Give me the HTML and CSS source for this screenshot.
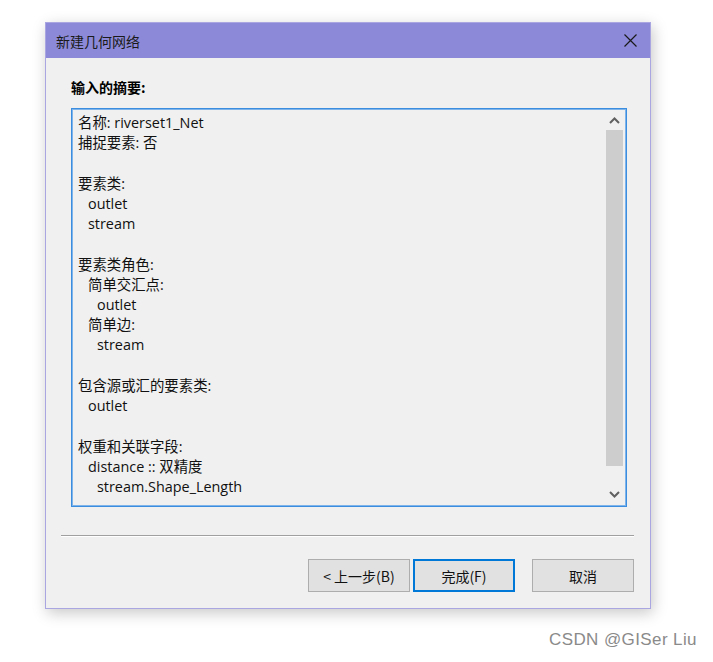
FILE: index.html
```html
<!DOCTYPE html>
<html lang="zh">
<head>
<meta charset="utf-8">
<title>新建几何网络</title>
<link rel="stylesheet" href="styles.css">
</head>
<body>
<div class="dialog">
  <div class="titlebar">
    <span class="title">新建几何网络</span>
    <svg class="close" width="13" height="13" viewBox="0 0 13 13"><path d="M0.5 0.5L12.5 12.5M12.5 0.5L0.5 12.5" stroke="#1a1a1a" stroke-width="1.2" fill="none"/></svg>
  </div>
  <div class="body">
    <div class="label">输入的摘要:</div>
    <div class="textbox">
      <div class="content">
        <div class="line">名称: riverset1_Net</div>
        <div class="line">捕捉要素: 否</div>
        <div class="line"></div>
        <div class="line">要素类:</div>
        <div class="line i1">outlet</div>
        <div class="line i1">stream</div>
        <div class="line"></div>
        <div class="line">要素类角色:</div>
        <div class="line i1">简单交汇点:</div>
        <div class="line i2">outlet</div>
        <div class="line i1">简单边:</div>
        <div class="line i2">stream</div>
        <div class="line"></div>
        <div class="line">包含源或汇的要素类:</div>
        <div class="line i1">outlet</div>
        <div class="line"></div>
        <div class="line">权重和关联字段:</div>
        <div class="line i1">distance :: 双精度</div>
        <div class="line i2">stream.Shape_Length</div>
      </div>
      <div class="scrollbar">
        <div class="arrow"><svg width="11" height="7" viewBox="0 0 11 7"><path d="M1 6L5.5 1.5L10 6" stroke="#606060" stroke-width="2" fill="none"/></svg></div>
        <div class="thumb"></div>
        <div class="track"></div>
        <div class="arrow"><svg width="11" height="7" viewBox="0 0 11 7"><path d="M1 1L5.5 5.5L10 1" stroke="#606060" stroke-width="2" fill="none"/></svg></div>
      </div>
    </div>
    <div class="separator"></div>
    <div class="buttons">
      <button class="btn">&lt; 上一步(B)</button>
      <button class="btn primary">完成(F)</button>
      <button class="btn cancel">取消</button>
    </div>
  </div>
</div>
<div class="watermark">CSDN @GISer Liu</div>
</body>
</html>
```
FILE: styles.css
```css
html, body {
  margin: 0;
  padding: 0;
  background: #ffffff;
}
body {
  width: 713px;
  height: 662px;
  position: relative;
  overflow: hidden;
  font-family: "Open Sans", "Noto Sans CJK SC", sans-serif;
  color: #000;
}
.dialog {
  margin-left: 45px;
  margin-top: 22px;
  width: 604px;
  height: 585px;
  border: 1px solid #a9a6e2;
  background: #f0f0f0;
  box-shadow: 2px 4px 14px rgba(0,0,0,0.22);
  display: flex;
  flex-direction: column;
}
.titlebar {
  height: 35px;
  background: #8c8ad8;
  display: flex;
  align-items: center;
  justify-content: space-between;
  padding: 0 13px 0 10px;
  flex: none;
}
.title {
  font-size: 14px;
  color: #1a1a1a;
  font-family: "Noto Sans CJK SC", sans-serif;
}
.close { display: block; }
.body {
  flex: 1;
  display: flex;
  flex-direction: column;
  padding: 0 16px 0 15px;
}
.label {
  font-family: "Noto Sans CJK SC", sans-serif;
  font-weight: bold;
  font-size: 14px;
  line-height: 20px;
  margin: 19px 0 0 10px;
  height: 20px;
}
.textbox {
  margin: 11px 7px 0 10px;
  height: 393px;
  border: 1px solid #3a8ddf;
  box-shadow: inset 0 0 0 1px #7fb4ea;
  background: #f0f0f0;
  display: flex;
  padding: 2px;
  flex: none;
}
.content {
  flex: 1;
  padding: 2px 0 0 4px;
  font-size: 14.4px;
  line-height: 20.22px;
  color: #111;
}
.line {
  height: 20.22px;
  white-space: pre;
}
.i1 { padding-left: 10px; }
.i2 { padding-left: 19px; }
.scrollbar {
  width: 17px;
  display: flex;
  flex-direction: column;
  margin-right: 1px;
  background: #f0f0f0;
}
.arrow {
  height: 19px;
  display: flex;
  align-items: center;
  justify-content: center;
  flex: none;
}
.thumb {
  height: 336px;
  background: #cdcdcd;
  flex: none;
}
.track { flex: 1; }
.separator {
  margin: 28px 0 0 0;
  height: 1px;
  background: #a0a0a0;
  border-bottom: 1px solid #ffffff;
  flex: none;
}
.buttons {
  display: flex;
  justify-content: flex-end;
  margin-top: 22px;
  gap: 3px;
}
.btn {
  width: 102px;
  height: 33px;
  background: #e1e1e1;
  border: 1px solid #adadad;
  font-family: "Noto Sans CJK SC", sans-serif;
  font-size: 14px;
  color: #111;
  padding: 0;
  margin: 0;
}
.btn.primary {
  border: 2px solid #0078d7;
}
.btn.cancel {
  margin-left: 14px;
}
.watermark {
  position: absolute;
  left: 549px;
  top: 630px;
  font-family: "Liberation Sans", sans-serif;
  font-size: 17px;
  color: #8a8a8a;
  letter-spacing: 0.4px;
}
```
